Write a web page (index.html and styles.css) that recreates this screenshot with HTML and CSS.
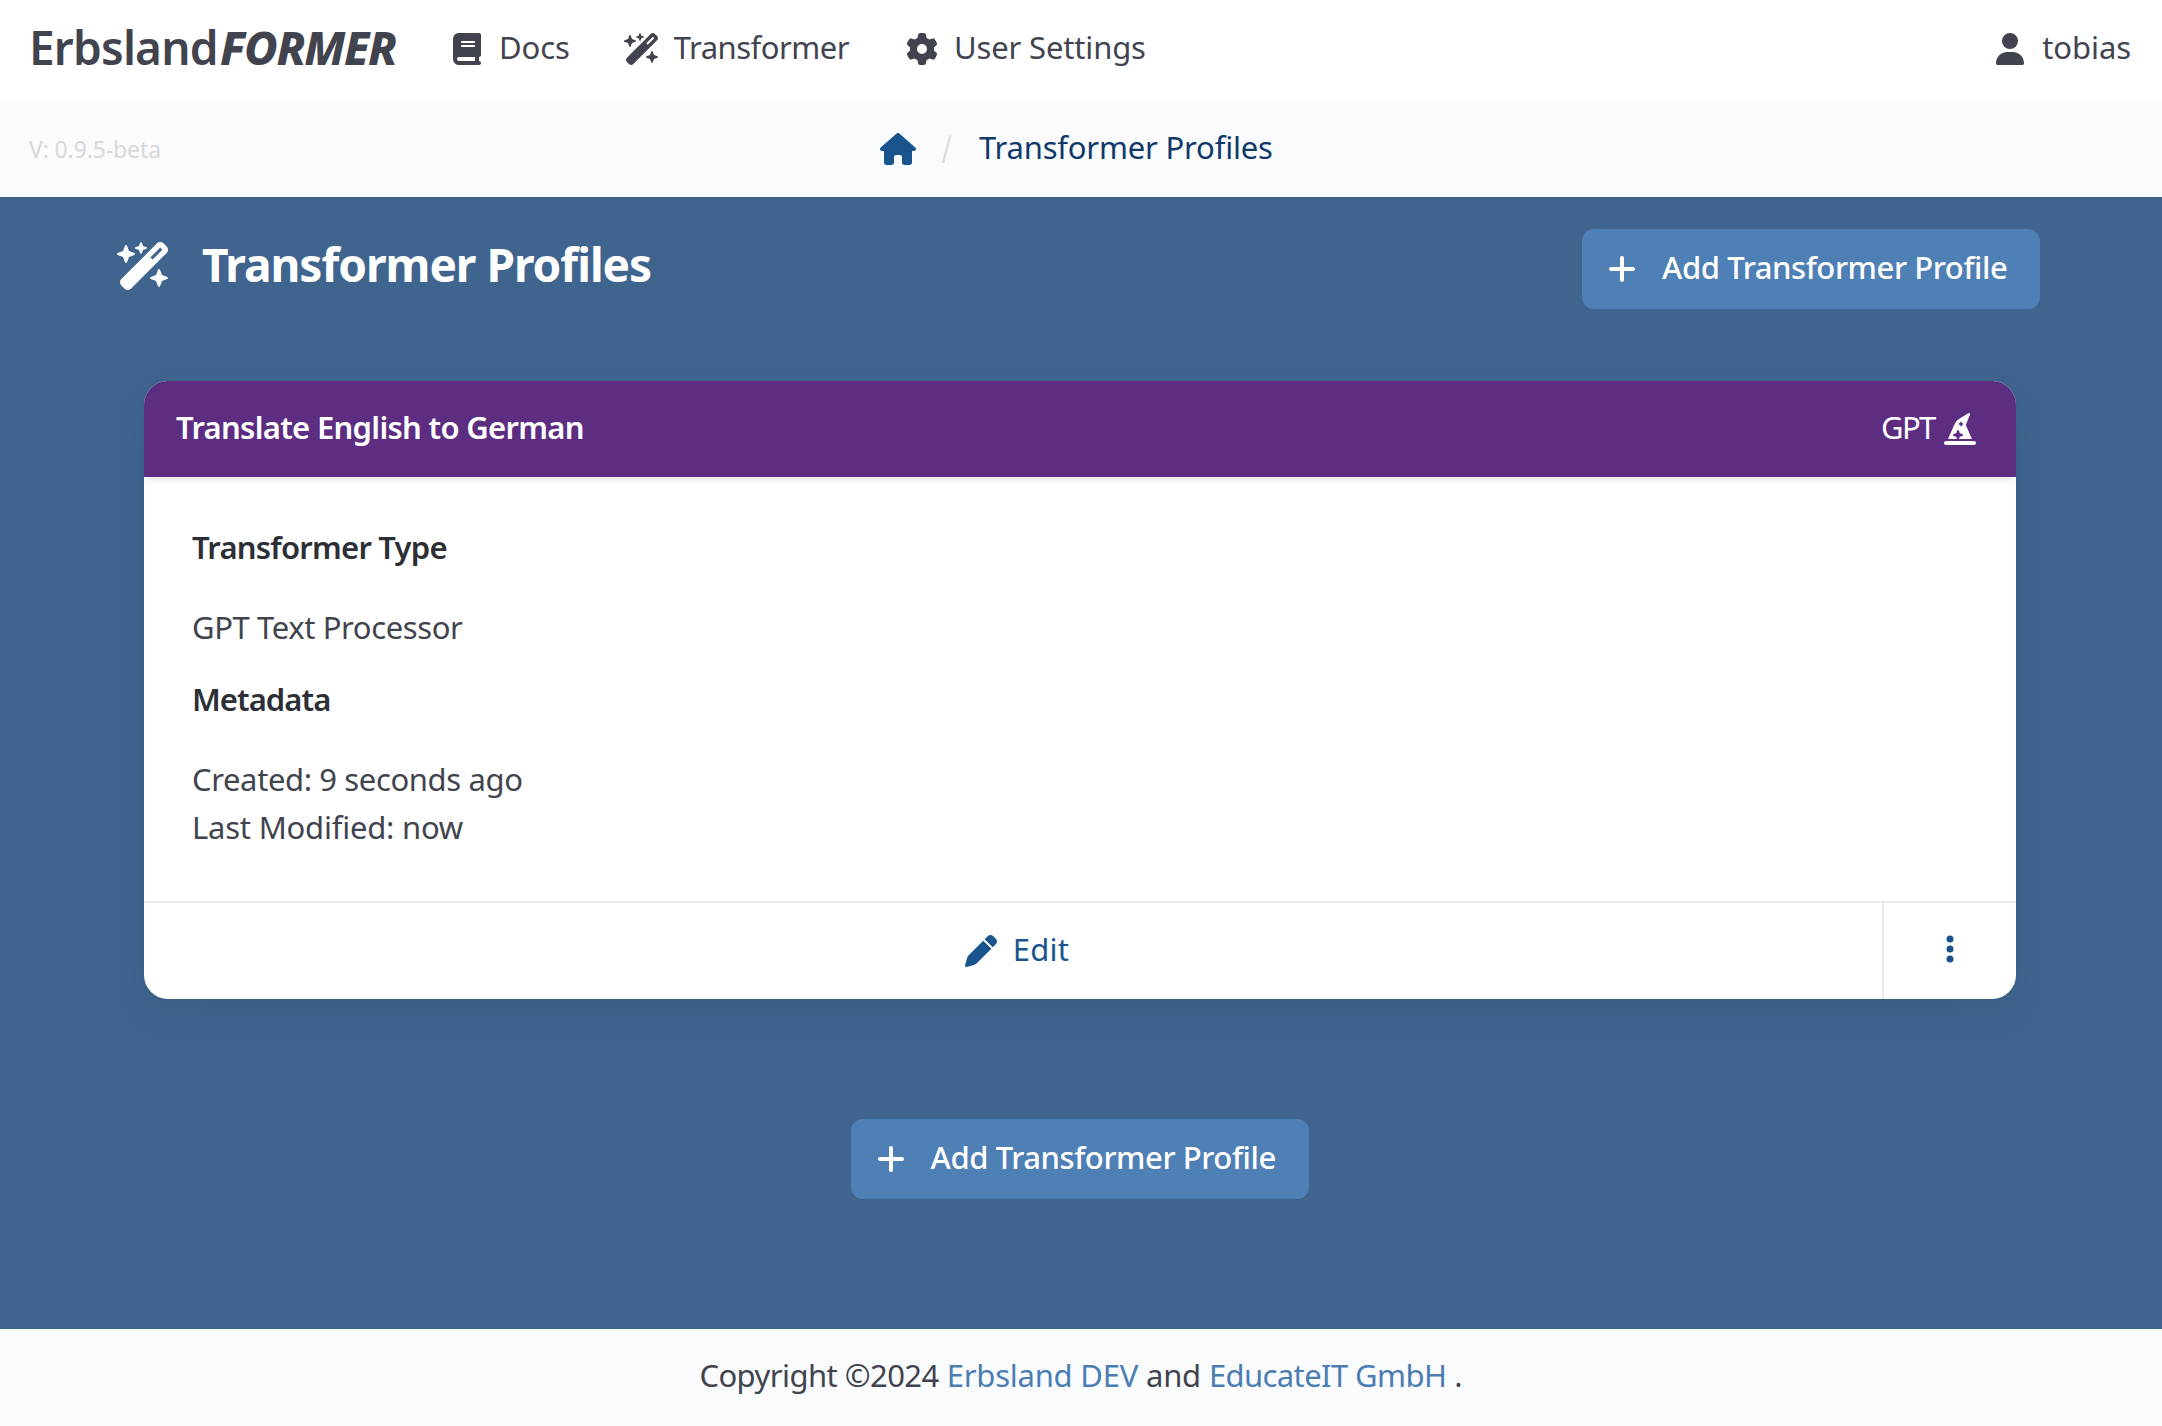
FILE: index.html
```
<!DOCTYPE html>
<html lang="en">
<head>
<meta charset="utf-8">
<title>Transformer Profiles - ErbslandFORMER</title>
<link rel="stylesheet" href="styles.css">
</head>
<body>
<svg class="sprite" aria-hidden="true">
  <symbol id="wand" viewBox="0 0 576 512"><path d="M234.7 42.7L197 56.8c-3 1.1-5 4-5 7.2s2 6.1 5 7.2l37.7 14.1L248.8 123c1.1 3 4 5 7.2 5s6.1-2 7.2-5l14.1-37.7L315 71.2c3-1.1 5-4 5-7.2s-2-6.1-5-7.2L277.3 42.7 263.2 5c-1.1-3-4-5-7.2-5s-6.1 2-7.2 5L234.7 42.7zM46.1 395.4c-18.7 18.7-18.7 49.1 0 67.9l34.6 34.6c18.7 18.7 49.1 18.7 67.9 0L529.9 116.5c18.7-18.7 18.7-49.1 0-67.9L495.3 14.1c-18.7-18.7-49.1-18.7-67.9 0L46.1 395.4zM484.6 82.6l-105 105-23.3-23.3 105-105 23.3 23.3zM7.5 117.2C3 118.9 0 123.2 0 128s3 9.1 7.5 10.8L64 160l21.2 56.5c1.7 4.5 6 7.5 10.8 7.5s9.1-3 10.8-7.5L128 160l56.5-21.2c4.5-1.7 7.5-6 7.5-10.8s-3-9.1-7.5-10.8L128 96 106.8 39.5C105.1 35 100.8 32 96 32s-9.1 3-10.8 7.5L64 96 7.5 117.2zm352 256c-4.5 1.7-7.5 6-7.5 10.8s3 9.1 7.5 10.8L416 416l21.2 56.5c1.7 4.5 6 7.5 10.8 7.5s9.1-3 10.8-7.5L480 416l56.5-21.2c4.5-1.7 7.5-6 7.5-10.8s-3-9.1-7.5-10.8L480 352l-21.2-56.5c-1.7-4.5-6-7.5-10.8-7.5s-9.1 3-10.8 7.5L416 352l-56.5 21.2z"/></symbol>
  <symbol id="plus" viewBox="0 0 448 512"><path d="M256 80c0-17.7-14.3-32-32-32s-32 14.3-32 32V224H48c-17.7 0-32 14.3-32 32s14.3 32 32 32H192V432c0 17.7 14.3 32 32 32s32-14.3 32-32V288H400c17.7 0 32-14.3 32-32s-14.3-32-32-32H256V80z"/></symbol>
</svg>

<header class="navbar">
  <a class="brand"><span class="brand-name">Erbsland</span><span class="brand-suffix">FORMER</span></a>
  <nav class="nav">
    <a class="nav-item"><svg class="icon nav-icon" viewBox="0 0 448 512"><path d="M96 0C43 0 0 43 0 96V416c0 53 43 96 96 96H384h32c17.7 0 32-14.3 32-32s-14.3-32-32-32V384c17.7 0 32-14.3 32-32V32c0-17.7-14.3-32-32-32H384 96zm0 384H352v64H96c-17.7 0-32-14.3-32-32s14.3-32 32-32zm32-240c0-8.8 7.2-16 16-16H336c8.8 0 16 7.2 16 16s-7.2 16-16 16H144c-8.8 0-16-7.2-16-16zm16 48H336c8.8 0 16 7.2 16 16s-7.2 16-16 16H144c-8.8 0-16-7.2-16-16s7.2-16 16-16z"/></svg><span class="label docs">Docs</span></a>
    <a class="nav-item"><svg class="icon nav-icon"><use href="#wand"/></svg><span class="label transformer">Transformer</span></a>
    <a class="nav-item settings-item"><svg class="icon nav-icon" viewBox="0 0 512 512"><path d="M495.9 166.6c3.2 8.7 .5 18.4-6.4 24.6l-43.3 39.4c1.1 8.3 1.7 16.8 1.7 25.4s-.6 17.1-1.7 25.4l43.3 39.4c6.9 6.2 9.6 15.9 6.4 24.6c-4.4 11.9-9.7 23.3-15.8 34.3l-4.7 8.1c-6.6 11-14 21.4-22.1 31.2c-5.9 7.2-15.7 9.6-24.5 6.8l-55.7-17.7c-13.4 10.3-28.2 18.9-44 25.4l-12.5 57.1c-2 9.1-9 16.3-18.2 17.8c-13.8 2.3-28 3.5-42.5 3.5s-28.7-1.2-42.5-3.5c-9.2-1.5-16.2-8.7-18.2-17.8l-12.5-57.1c-15.8-6.5-30.6-15.1-44-25.4L83.1 425.9c-8.8 2.8-18.6 .3-24.5-6.8c-8.1-9.8-15.5-20.2-22.1-31.2l-4.7-8.1c-6.1-11-11.4-22.4-15.8-34.3c-3.2-8.7-.5-18.4 6.4-24.6l43.3-39.4C64.6 273.1 64 264.6 64 256s.6-17.1 1.7-25.4L22.4 191.2c-6.9-6.2-9.6-15.9-6.4-24.6c4.4-11.9 9.7-23.3 15.8-34.3l4.7-8.1c6.6-11 14-21.4 22.1-31.2c5.9-7.2 15.7-9.6 24.5-6.8l55.7 17.7c13.4-10.3 28.2-18.9 44-25.4l12.5-57.1c2-9.1 9-16.3 18.2-17.8C227.3 1.2 241.5 0 256 0s28.7 1.2 42.5 3.5c9.2 1.5 16.2 8.7 18.2 17.8l12.5 57.1c15.8 6.5 30.6 15.1 44 25.4l55.7-17.7c8.8-2.8 18.6-.3 24.5 6.8c8.1 9.8 15.5 20.2 22.1 31.2l4.7 8.1c6.1 11 11.4 22.4 15.8 34.3zM256 336a80 80 0 1 0 0-160 80 80 0 1 0 0 160z"/></svg><span class="label settings">User Settings</span></a>
  </nav>
  <a class="nav-item user"><svg class="icon nav-icon" viewBox="0 0 448 512"><path d="M224 256A128 128 0 1 0 224 0a128 128 0 1 0 0 256zm-45.7 48C79.8 304 0 383.8 0 482.3C0 498.7 13.3 512 29.7 512H418.3c16.4 0 29.7-13.3 29.7-29.7C448 383.8 368.2 304 269.7 304H178.3z"/></svg><span class="label username">tobias</span></a>
</header>

<div class="subbar">
  <span class="version">V: 0.9.5-beta</span>
  <nav class="breadcrumb">
    <svg class="icon home" viewBox="0 0 576 512"><path d="M575.8 255.5c0 18-15 32.1-32 32.1h-32l.7 160.2c0 2.7-.2 5.4-.5 8.1V472c0 22.1-17.9 40-40 40H456c-1.1 0-2.2 0-3.3-.1c-1.4 .1-2.8 .1-4.2 .1H416 392c-22.1 0-40-17.9-40-40V448 384c0-17.7-14.3-32-32-32H256c-17.7 0-32 14.3-32 32v64 24c0 22.1-17.9 40-40 40H160 128.1c-1.5 0-3-.1-4.5-.2c-1.2 .1-2.4 .2-3.6 .2H104c-22.1 0-40-17.9-40-40V360c0-.9 0-1.9 .1-2.8V287.6H32c-18 0-32-14-32-32.1c0-9 3-17 10-24L266.4 8c7-7 15-8 22-8s15 2 21 7L564.8 231.5c8 7 12 15 11 24z"/></svg>
    <svg class="slash" viewBox="0 0 10 30"><path d="M1 29 8.5 1"/></svg>
    <span class="label current">Transformer Profiles</span>
  </nav>
</div>

<main class="main">
  <div class="page-head">
    <h1 class="page-title"><svg class="title-icon"><use href="#wand"/></svg><span class="title-text">Transformer Profiles</span></h1>
    <a class="button"><svg class="icon plus"><use href="#plus"/></svg><span class="button-text">Add Transformer Profile</span></a>
  </div>

  <article class="card">
    <header class="card-header">
      <span class="card-title">Translate English to German</span>
      <span class="card-kind"><span class="gpt">GPT</span><svg class="icon hat" viewBox="0 0 512 512"><path d="M64 416L168.6 180.7c15.3-34.4 40.3-63.5 72-83.7l146.9-94c3-1.9 6.5-2.9 10-2.9C407.7 0 416 8.3 416 18.6v1.6c0 2.6-.5 5.1-1.4 7.5L354.8 176.9c-1.9 4.7-2.8 9.7-2.8 14.7c0 5.5 1.2 11 3.4 16.1L448 416H240.9l11.8-35.4 40.4-13.5c6.5-2.2 10.9-8.3 10.9-15.2s-4.4-13-10.9-15.2l-40.4-13.5-13.5-40.4C237 276.4 230.9 272 224 272s-13 4.4-15.2 10.9l-13.5 40.4-40.4 13.5C148.4 339 144 345.1 144 352s4.4 13 10.9 15.2l40.4 13.5L207.1 416H64zM279.6 141.5c-1.1-3.3-4.1-5.5-7.6-5.5s-6.5 2.2-7.6 5.5l-6.7 20.2-20.2 6.7c-3.3 1.1-5.5 4.1-5.5 7.6s2.2 6.5 5.5 7.6l20.2 6.7 6.7 20.2c1.1 3.3 4.1 5.5 7.6 5.5s6.5-2.2 7.6-5.5l6.7-20.2 20.2-6.7c3.3-1.1 5.5-4.1 5.5-7.6s-2.2-6.5-5.5-7.6l-20.2-6.7-6.7-20.2zM32 448H480c17.7 0 32 14.3 32 32s-14.3 32-32 32H32c-17.7 0-32-14.3-32-32s14.3-32 32-32z"/></svg></span>
    </header>
    <div class="card-body">
      <h2 class="section-title type-title">Transformer Type</h2>
      <p class="text kind">GPT Text Processor</p>
      <h2 class="section-title">Metadata</h2>
      <p class="text"><span class="created">Created: 9 seconds ago</span><br><span class="modified">Last Modified: now</span></p>
    </div>
    <footer class="card-footer">
      <a class="edit"><svg class="icon pen" viewBox="0 0 512 512"><path d="M362.7 19.3L314.3 67.7 444.3 197.7l48.4-48.4c25-25 25-65.5 0-90.5L453.3 19.3c-25-25-65.5-25-90.5 0zm-71 71L58.6 323.5c-10.4 10.4-18 23.3-22.2 37.4L1 481.2C-1.5 489.7 .8 498.8 7 505s15.3 8.5 23.7 6.1l120.3-35.4c14.1-4.2 27-11.8 37.4-22.2L421.7 220.3 291.7 90.3z"/></svg><span class="label edit-text">Edit</span></a>
      <a class="more"><svg class="dots" viewBox="0 0 8 28"><circle cx="4" cy="4" r="3.5"/><circle cx="4" cy="14" r="3.5"/><circle cx="4" cy="24" r="3.5"/></svg></a>
    </footer>
  </article>

  <a class="button"><svg class="icon plus"><use href="#plus"/></svg><span class="button-text">Add Transformer Profile</span></a>
</main>

<footer class="footer">
  <span class="copyright">Copyright ©2024</span>
  <a class="link dev">Erbsland DEV</a>
  <span class="and">and</span>
  <a class="link educate">EducateIT GmbH</a>
  <span>.</span>
</footer>
</body>
</html>
```
FILE: styles.css
```
* {
  box-sizing: border-box;
}

body {
  margin: 0;
  width: 2162px;
  min-height: 1426px;
  display: flex;
  flex-direction: column;
  background: #fafbfd;
  color: #41444e;
  font-family: "Noto Sans", sans-serif;
  font-size: 31px;
  line-height: 48px;
  white-space: nowrap;
}

h1, h2, p {
  margin: 0;
}

.sprite {
  display: none;
}

.icon {
  height: 32px;
  flex: none;
  fill: currentColor;
}

.label {
  margin-bottom: 4px;
}

/* Top navigation */
.navbar {
  height: 100px;
  padding: 0 31px 2px 29px;
  display: flex;
  align-items: center;
  background: #fff;
}

.brand {
  width: 367px;
  display: flex;
  align-items: center;
  margin-bottom: 4px;
  font-size: 46px;
}

.brand-name {
  width: 191px;
  font-weight: 600;
  letter-spacing: -0.8px;
}

.brand-suffix {
  font-weight: 800;
  font-style: italic;
  letter-spacing: -1.34px;
}

.nav {
  display: flex;
  gap: 54px;
  margin-left: 53px;
}

.nav-item {
  display: flex;
  align-items: center;
  gap: 14px;
}

.nav-icon {
  width: 36px;
}

.settings-item {
  margin-left: 1px;
}

.docs { letter-spacing: -0.09px; }
.transformer { letter-spacing: -0.5px; }
.settings { letter-spacing: -0.16px; }
.username { letter-spacing: -0.08px; }

.user {
  margin-left: auto;
}

/* Breadcrumb bar */
.subbar {
  height: 97px;
  padding: 0 29px;
  display: grid;
  grid-template-columns: 851px auto 1fr;
  align-items: center;
}

.version {
  color: #d6d8db;
  font-size: 23px;
  letter-spacing: -0.12px;
}

.breadcrumb {
  padding-top: 1px;
  display: flex;
  align-items: center;
}

.home {
  width: 36px;
  color: #19548f;
}

.slash {
  width: 10px;
  height: 30px;
  margin: 0 27px 0 26px;
  fill: none;
  stroke: #dbdddf;
  stroke-width: 2.4;
}

.current {
  color: #10396a;
  letter-spacing: -0.19px;
}

/* Content */
.main {
  height: 1132px;
  padding: 32px 122px 0 117px;
  display: flex;
  flex-direction: column;
  align-items: center;
  background: #3f658f;
}

.page-head {
  width: 100%;
  height: 80px;
  display: flex;
  justify-content: space-between;
  align-items: flex-start;
}

.page-title {
  display: flex;
  align-items: center;
  color: #fff;
  font-size: 46px;
  line-height: 70px;
}

.title-icon {
  width: 54px;
  height: 48px;
  margin: 4px 31px 0 0;
  fill: currentColor;
}

.title-text {
  letter-spacing: -1px;
}

.button {
  width: 458px;
  height: 80px;
  padding: 0 26px;
  display: flex;
  align-items: center;
  gap: 26px;
  border-radius: 12px;
  background: #4f80b5;
  color: #fff;
}

.card + .button {
  margin-left: 2px;
}

.button-text {
  margin-bottom: 4px;
  font-weight: 500;
  letter-spacing: -0.41px;
}

.plus {
  width: 28px;
}

/* Profile card */
.card {
  width: 1872px;
  height: 618px;
  margin: 72px 0 120px 27px;
  align-self: flex-start;
  display: flex;
  flex-direction: column;
  overflow: hidden;
  border-radius: 24px;
  background: #fff;
  box-shadow: 0 16px 32px -4px rgba(10, 60, 70, 0.16), 0 0 2px rgba(10, 10, 10, 0.04);
}

.card-header {
  height: 96px;
  flex: none;
  padding: 0 40px 4px 32px;
  display: flex;
  justify-content: space-between;
  align-items: center;
  background: #5d2d82;
  color: #fff;
  box-shadow: 0 4px 8px rgba(10, 10, 10, 0.08);
}

.card-title {
  font-weight: 600;
  letter-spacing: -0.69px;
}

.card-kind {
  display: flex;
  align-items: center;
}

.gpt {
  width: 63px;
  letter-spacing: -1.6px;
}

.hat {
  width: 32px;
  margin-top: 4px;
}

.card-body {
  flex: 1;
  padding: 46px 48px 0;
}

.section-title {
  margin-bottom: 32px;
  color: #2c2f36;
  font-size: 31px;
  font-weight: 600;
  letter-spacing: -0.95px;
}

.type-title {
  letter-spacing: -0.77px;
}

.kind {
  margin-bottom: 24px;
  letter-spacing: -0.39px;
}

.created { letter-spacing: -0.38px; }
.modified { letter-spacing: -0.22px; }

.card-footer {
  height: 98px;
  flex: none;
  display: flex;
  border-top: 2px solid #eaeaea;
  color: #19548f;
}

.edit {
  flex: 1;
  padding-left: 8px;
  display: flex;
  align-items: center;
  justify-content: center;
  gap: 16px;
}

.edit-text {
  letter-spacing: 0.23px;
}

.pen {
  width: 32px;
}

.more {
  width: 134px;
  display: flex;
  align-items: center;
  justify-content: center;
  border-left: 2px solid #eaeaea;
}

.dots {
  width: 8px;
  height: 28px;
  margin: 0 1px 4px 0;
  fill: currentColor;
}

/* Footer */
.footer {
  height: 97px;
  padding-bottom: 5px;
  display: flex;
  justify-content: center;
  align-items: center;
  gap: 8px;
}

.link {
  color: #4b7db3;
}

.copyright { letter-spacing: -0.55px; }
.dev { letter-spacing: -0.23px; }
.and { letter-spacing: -0.27px; }
.educate { letter-spacing: -0.6px; }
```
